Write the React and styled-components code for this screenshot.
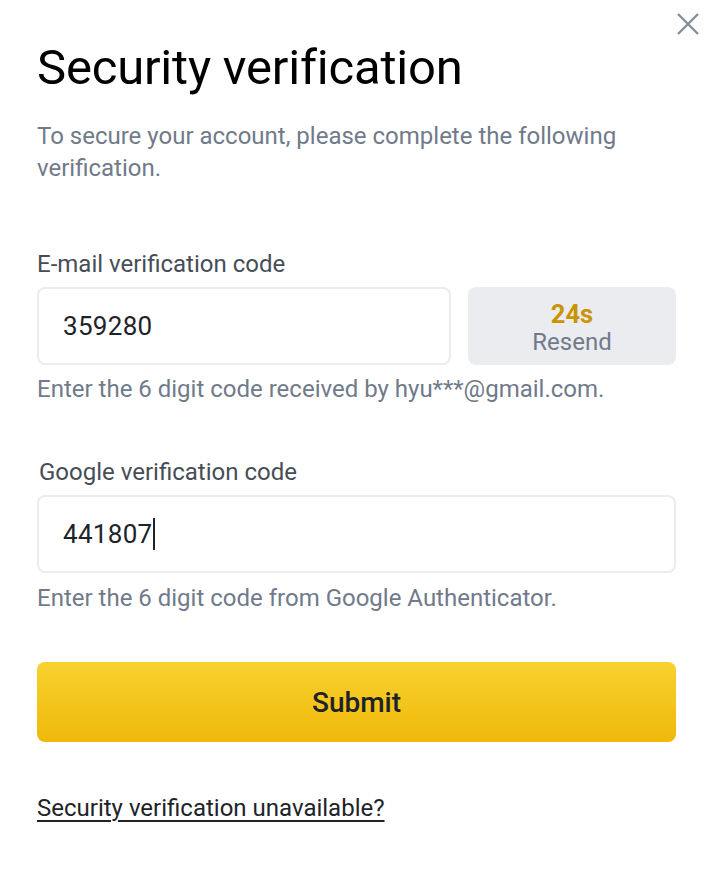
import styled, { createGlobalStyle } from "styled-components";

const GlobalStyle = createGlobalStyle`
  html, body {
    margin: 0;
    padding: 0;
    background: #ffffff;
  }
  body {
    font-family: Roboto, "Noto Sans", "Liberation Sans", sans-serif;
    -webkit-font-smoothing: antialiased;
  }
`;

const Modal = styled.div`
  position: relative;
  box-sizing: border-box;
  width: 710px;
  min-height: 872px;
  padding: 40px 34px 40px 37px;
  background: #fff;
`;

const Close = styled.button`
  position: absolute;
  top: 12px;
  right: 10px;
  width: 24px;
  height: 24px;
  padding: 0;
  border: 0;
  background: none;
  cursor: pointer;
  color: #858e9b;
`;

const Title = styled.h1`
  margin: 0;
  font-size: 49px;
  line-height: 56px;
  font-weight: 400;
  color: #000;
  letter-spacing: -0.2px;
`;

const Subtitle = styled.p`
  margin: 24px 0 0;
  font-size: 24px;
  line-height: 32px;
  color: #707a8a;
  max-width: 600px;
`;

const Group = styled.div`
  margin-top: ${(p) => p.$top}px;
`;

const Label = styled.div`
  font-size: 24px;
  line-height: 32px;
  color: #474d57;
  padding-left: ${(p) => (p.$nudge ? 2 : 0)}px;
  margin-bottom: 7px;
`;

const Row = styled.div`
  display: flex;
  gap: 17px;
`;

const Field = styled.div`
  flex: 1;
  box-sizing: border-box;
  height: 78px;
  display: flex;
  align-items: center;
  padding: 0 24px;
  border: 2px solid #eaecef;
  border-radius: 8px;
  font-size: 26px;
  color: #1e2329;
  letter-spacing: 0.3px;
`;

const Caret = styled.span`
  display: inline-block;
  width: 2px;
  height: 32px;
  margin-left: 1px;
  background: #1e2329;
`;

const Resend = styled.button`
  width: 208px;
  height: 78px;
  border: 0;
  border-radius: 8px;
  background: #eaecef;
  display: flex;
  flex-direction: column;
  align-items: center;
  justify-content: center;
  font-family: inherit;
  padding: 4px 0 0;
  cursor: pointer;
`;

const Countdown = styled.span`
  font-size: 25.5px;
  line-height: 28px;
  font-weight: 700;
  color: #c99400;
`;

const ResendText = styled.span`
  font-size: 24px;
  line-height: 28px;
  color: #707a8a;
`;

const Helper = styled.div`
  margin-top: ${(p) => p.$top}px;
  font-size: 24px;
  line-height: 32px;
  color: #707a8a;
`;

const Submit = styled.button`
  display: block;
  width: 100%;
  height: 80px;
  margin-top: 48px;
  border: 0;
  border-radius: 8px;
  background: linear-gradient(180deg, #f8d12f 0%, #f0b90b 100%);
  font-family: inherit;
  font-size: 28px;
  font-weight: 500;
  color: #1e2329;
  cursor: pointer;
`;

const HelpLink = styled.a`
  display: inline-block;
  margin-top: 50px;
  font-size: 24px;
  line-height: 32px;
  color: #1e2329;
  text-decoration: underline;
  text-underline-offset: 4px;
  text-decoration-thickness: 1.5px;
`;

export default function App() {
  return (
    <>
      <GlobalStyle />
      <Modal>
        <Close aria-label="Close">
          <svg width="24" height="24" viewBox="0 0 24 24" fill="none">
            <path d="M2 2L22 22M22 2L2 22" stroke="currentColor" strokeWidth="2.4" />
          </svg>
        </Close>

        <Title>Security verification</Title>
        <Subtitle>
          To secure your account, please complete the following verification.
        </Subtitle>

        <Group $top={64}>
          <Label>E-mail verification code</Label>
          <Row>
            <Field>359280</Field>
            <Resend>
              <Countdown>24s</Countdown>
              <ResendText>Resend</ResendText>
            </Resend>
          </Row>
          <Helper $top={8}>Enter the 6 digit code received by hyu***@gmail.com.</Helper>
        </Group>

        <Group $top={51}>
          <Label $nudge>Google verification code</Label>
          <Row>
            <Field>
              441807
              <Caret />
            </Field>
          </Row>
          <Helper $top={9}>Enter the 6 digit code from Google Authenticator.</Helper>
        </Group>

        <Submit>Submit</Submit>
        <HelpLink href="#">Security verification unavailable?</HelpLink>
      </Modal>
    </>
  );
}
